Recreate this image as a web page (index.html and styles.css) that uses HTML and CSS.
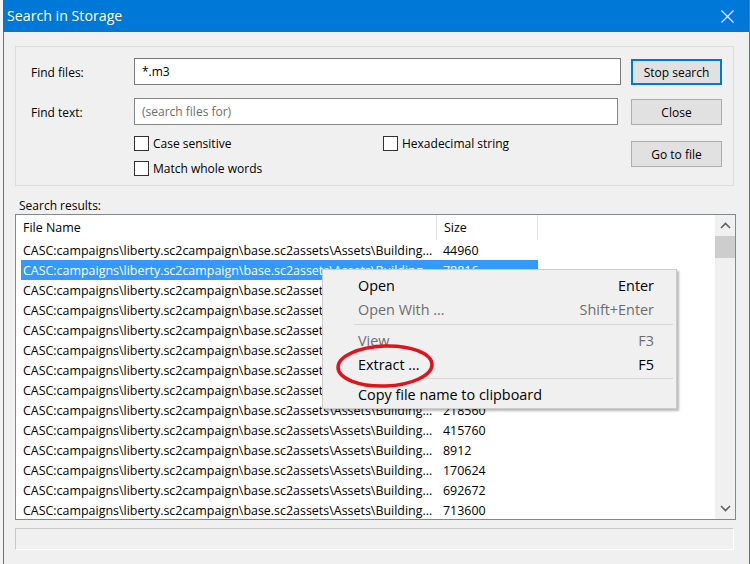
FILE: index.html
```html
<!DOCTYPE html>
<html>
<head>
<meta charset="utf-8">
<link rel="stylesheet" href="styles.css">
</head>
<body>
<div class="desk">
  <div class="strip"></div>
  <div class="window">
    <div class="titlebar">
      <span class="title">Search in Storage</span>
      <svg class="xicon" width="13" height="13" viewBox="0 0 13 13"><path d="M0.5 0.5 L12.5 12.5 M12.5 0.5 L0.5 12.5" stroke="#fff" stroke-width="1.1" fill="none"/></svg>
    </div>
    <div class="client">
      <div class="group">
        <div class="form">
          <div class="frow"><span class="lbl">Find files:</span><div class="input w1">*.m3</div></div>
          <div class="frow r2"><span class="lbl">Find text:</span><div class="input w2 ph">(search files for)</div></div>
          <div class="checks">
            <div class="chk"><span class="box"></span>Case sensitive</div>
            <div class="chk"><span class="box"></span>Hexadecimal string</div>
            <div class="chk"><span class="box"></span>Match whole words</div>
          </div>
        </div>
        <div class="buttons">
          <div class="btn def">Stop search</div>
          <div class="btn b2">Close</div>
          <div class="btn b3">Go to file</div>
        </div>
      </div>
      <div class="reslabel">Search results:</div>
      <div class="list">
        <div class="lmain">
          <div class="header"><div class="hc h1">File Name</div><div class="hc h2">Size</div></div>
          <div class="row"><span class="c1">CASC:campaigns\liberty.sc2campaign\base.sc2assets\Assets\Building...</span><span class="c2">44960</span></div>
          <div class="row sel"><span class="c1">CASC:campaigns\liberty.sc2campaign\base.sc2assets\Assets\Building...</span><span class="c2">78816</span></div>
          <div class="row"><span class="c1">CASC:campaigns\liberty.sc2campaign\base.sc2assets\Assets\Building...</span><span class="c2">121344</span></div>
          <div class="row"><span class="c1">CASC:campaigns\liberty.sc2campaign\base.sc2assets\Assets\Building...</span><span class="c2">56240</span></div>
          <div class="row"><span class="c1">CASC:campaigns\liberty.sc2campaign\base.sc2assets\Assets\Building...</span><span class="c2">304512</span></div>
          <div class="row"><span class="c1">CASC:campaigns\liberty.sc2campaign\base.sc2assets\Assets\Building...</span><span class="c2">9728</span></div>
          <div class="row"><span class="c1">CASC:campaigns\liberty.sc2campaign\base.sc2assets\Assets\Building...</span><span class="c2">187904</span></div>
          <div class="row"><span class="c1">CASC:campaigns\liberty.sc2campaign\base.sc2assets\Assets\Building...</span><span class="c2">65536</span></div>
          <div class="row"><span class="c1">CASC:campaigns\liberty.sc2campaign\base.sc2assets\Assets\Building...</span><span class="c2">218560</span></div>
          <div class="row"><span class="c1">CASC:campaigns\liberty.sc2campaign\base.sc2assets\Assets\Building...</span><span class="c2">415760</span></div>
          <div class="row"><span class="c1">CASC:campaigns\liberty.sc2campaign\base.sc2assets\Assets\Building...</span><span class="c2">8912</span></div>
          <div class="row"><span class="c1">CASC:campaigns\liberty.sc2campaign\base.sc2assets\Assets\Building...</span><span class="c2">170624</span></div>
          <div class="row"><span class="c1">CASC:campaigns\liberty.sc2campaign\base.sc2assets\Assets\Building...</span><span class="c2">692672</span></div>
          <div class="row"><span class="c1">CASC:campaigns\liberty.sc2campaign\base.sc2assets\Assets\Building...</span><span class="c2">713600</span></div>
        </div>
        <div class="vscroll">
          <div class="arrow up"><svg width="11" height="7" viewBox="0 0 11 7"><path d="M1 6 L5.5 1.5 L10 6" stroke="#606060" stroke-width="1.6" fill="none"/></svg></div>
          <div class="thumb"></div>
          <div class="track"></div>
          <div class="arrow dn"><svg width="11" height="7" viewBox="0 0 11 7"><path d="M1 1 L5.5 5.5 L10 1" stroke="#606060" stroke-width="1.6" fill="none"/></svg></div>
        </div>
      </div>
      <div class="status"></div>
    </div>
  </div>
</div>

<div class="menu">
  <div class="mi"><span>Open</span><span>Enter</span></div>
  <div class="mi dis"><span>Open With ...</span><span>Shift+Enter</span></div>
  <div class="sep"></div>
  <div class="mi dis"><span>View</span><span>F3</span></div>
  <div class="mi top"><span>Extract ...</span><span>F5</span></div>
  <div class="sep s2"></div>
  <div class="mi"><span>Copy file name to clipboard</span><span></span></div>
  <svg class="circle" width="104" height="50" viewBox="0 0 104 50"><ellipse cx="52" cy="25" rx="47" ry="20" transform="rotate(-2 52 25)" fill="#f0f0f0" stroke="#e3121b" stroke-width="3.5"/></svg>
</div>
</body>
</html>
```

FILE: styles.css
```css
* { box-sizing: border-box; }
html, body { margin: 0; padding: 0; }
body {
  width: 750px;
  height: 564px;
  overflow: hidden;
  background: #f0f0f0;
  font-family: "Open Sans", "Noto Sans", sans-serif;
  font-size: 12px;
  color: #000;
  position: relative;
}
.desk { display: flex; height: 564px; }
.strip { width: 3px; background: #f4f4f4; }
.window {
  flex: 1;
  border-left: 1px solid #2b7fd4;
  border-right: 1px solid #2b7fd4;
  background: #f0f0f0;
  display: flex;
  flex-direction: column;
}
.titlebar {
  height: 32px;
  background: #0078d7;
  display: flex;
  align-items: center;
  padding: 0 15px 0 3px;
  margin-left: -1px;
}
.title { color: #fff; font-size: 14.2px; flex: 1; padding-left: 1px; margin-top: -1px; }
.xicon { display: block; margin-top: 1px; }

.client { display: flex; flex-direction: column; }
.group {
  margin: 14px 15px 0 11px;
  height: 140px;
  border: 1px solid #dcdcdc;
  display: flex;
  padding: 11px 11px 0 15px;
}
.form { display: flex; flex-direction: column; }
.frow { display: flex; align-items: center; height: 27px; }
.frow.r2 { margin-top: 13px; }
.lbl { width: 103px; padding-top: 1px; }
.input {
  height: 27px;
  border: 1px solid #7a7a7a;
  background: #fff;
  padding: 4px 0 0 7px;
  line-height: 18px;
}
.w1 { width: 487px; }
.w2 { width: 484px; border-color: #858585; }
.ph { color: #6d6d6d; }
.checks {
  margin: 11px 0 0 103px;
  display: grid;
  grid-template-columns: 249px auto;
  row-gap: 10px;
}
.chk { display: flex; align-items: center; height: 15px; line-height: 17px; }
.box {
  width: 15px;
  height: 15px;
  border: 1px solid #333;
  background: #fff;
  margin-right: 4px;
}
.buttons { margin-left: auto; display: flex; flex-direction: column; padding-top: 1px; }
.btn {
  width: 91px;
  height: 26px;
  background: #e1e1e1;
  border: 1px solid #adadad;
  display: flex;
  align-items: center;
  justify-content: center;
}
.btn.def { border: 2px solid #0078d7; }
.btn.b2 { margin-top: 14px; }
.btn.b3 { margin-top: 16px; }

.reslabel { margin: 10px 0 0 15px; height: 18px; line-height: 19px; }
.list {
  margin-left: 11px;
  width: 721px;
  height: 306px;
  border: 1px solid #828790;
  background: #fff;
  display: flex;
  font-size: 12.45px;
}
.lmain { flex: 1; overflow: hidden; }
.header { display: flex; height: 25px; }
.hc { height: 25px; line-height: 26px; border-right: 1px solid #e5e5e5; padding-left: 7px; }
.h1 { width: 421px; }
.h2 { width: 101px; }
.row {
  display: flex;
  height: 20px;
  line-height: 21px;
  margin-left: 5px;
  width: 517px;
  white-space: nowrap;
}
.row .c1 { width: 415px; padding-left: 2px; overflow: hidden; }
.row .c2 { width: 102px; padding-left: 7px; }
.row.sel { background: #3399ff; color: #fff; }
.vscroll {
  width: 20px;
  background: #f0f0f0;
  display: flex;
  flex-direction: column;
}
.arrow { height: 21px; display: flex; align-items: center; justify-content: center; }
.thumb { height: 22px; background: #cdcdcd; }
.track { flex: 1; }

.status {
  margin: 8px 0 0 11px;
  width: 719px;
  height: 22px;
  border: 1px solid #c8c8c8;
  border-right-color: #fff;
  border-bottom-color: #fff;
}

.menu {
  position: absolute;
  left: 322px;
  top: 269px;
  width: 355px;
  height: 140px;
  background: #f0f0f0;
  border: 1px solid #cccccc;
  box-shadow: 2px 2px 2px rgba(0,0,0,0.28);
  padding-top: 3px;
  font-size: 14.4px;
}
.mi {
  height: 24px;
  line-height: 25px;
  display: flex;
  justify-content: space-between;
  padding: 0 22px 0 35px;
  white-space: nowrap;
}
.mi.dis { color: #6d6d6d; }
.mi.top { position: relative; z-index: 2; }
.sep { height: 7px; margin: 0 3px 0 31px; border-top: 3px solid #f0f0f0; }
.sep::before { content: ""; display: block; height: 1px; background: #d7d7d7; }
.sep.s2 { height: 6px; border-top-width: 2px; }
.circle { position: absolute; left: 10px; top: 71px; z-index: 1; }
```
